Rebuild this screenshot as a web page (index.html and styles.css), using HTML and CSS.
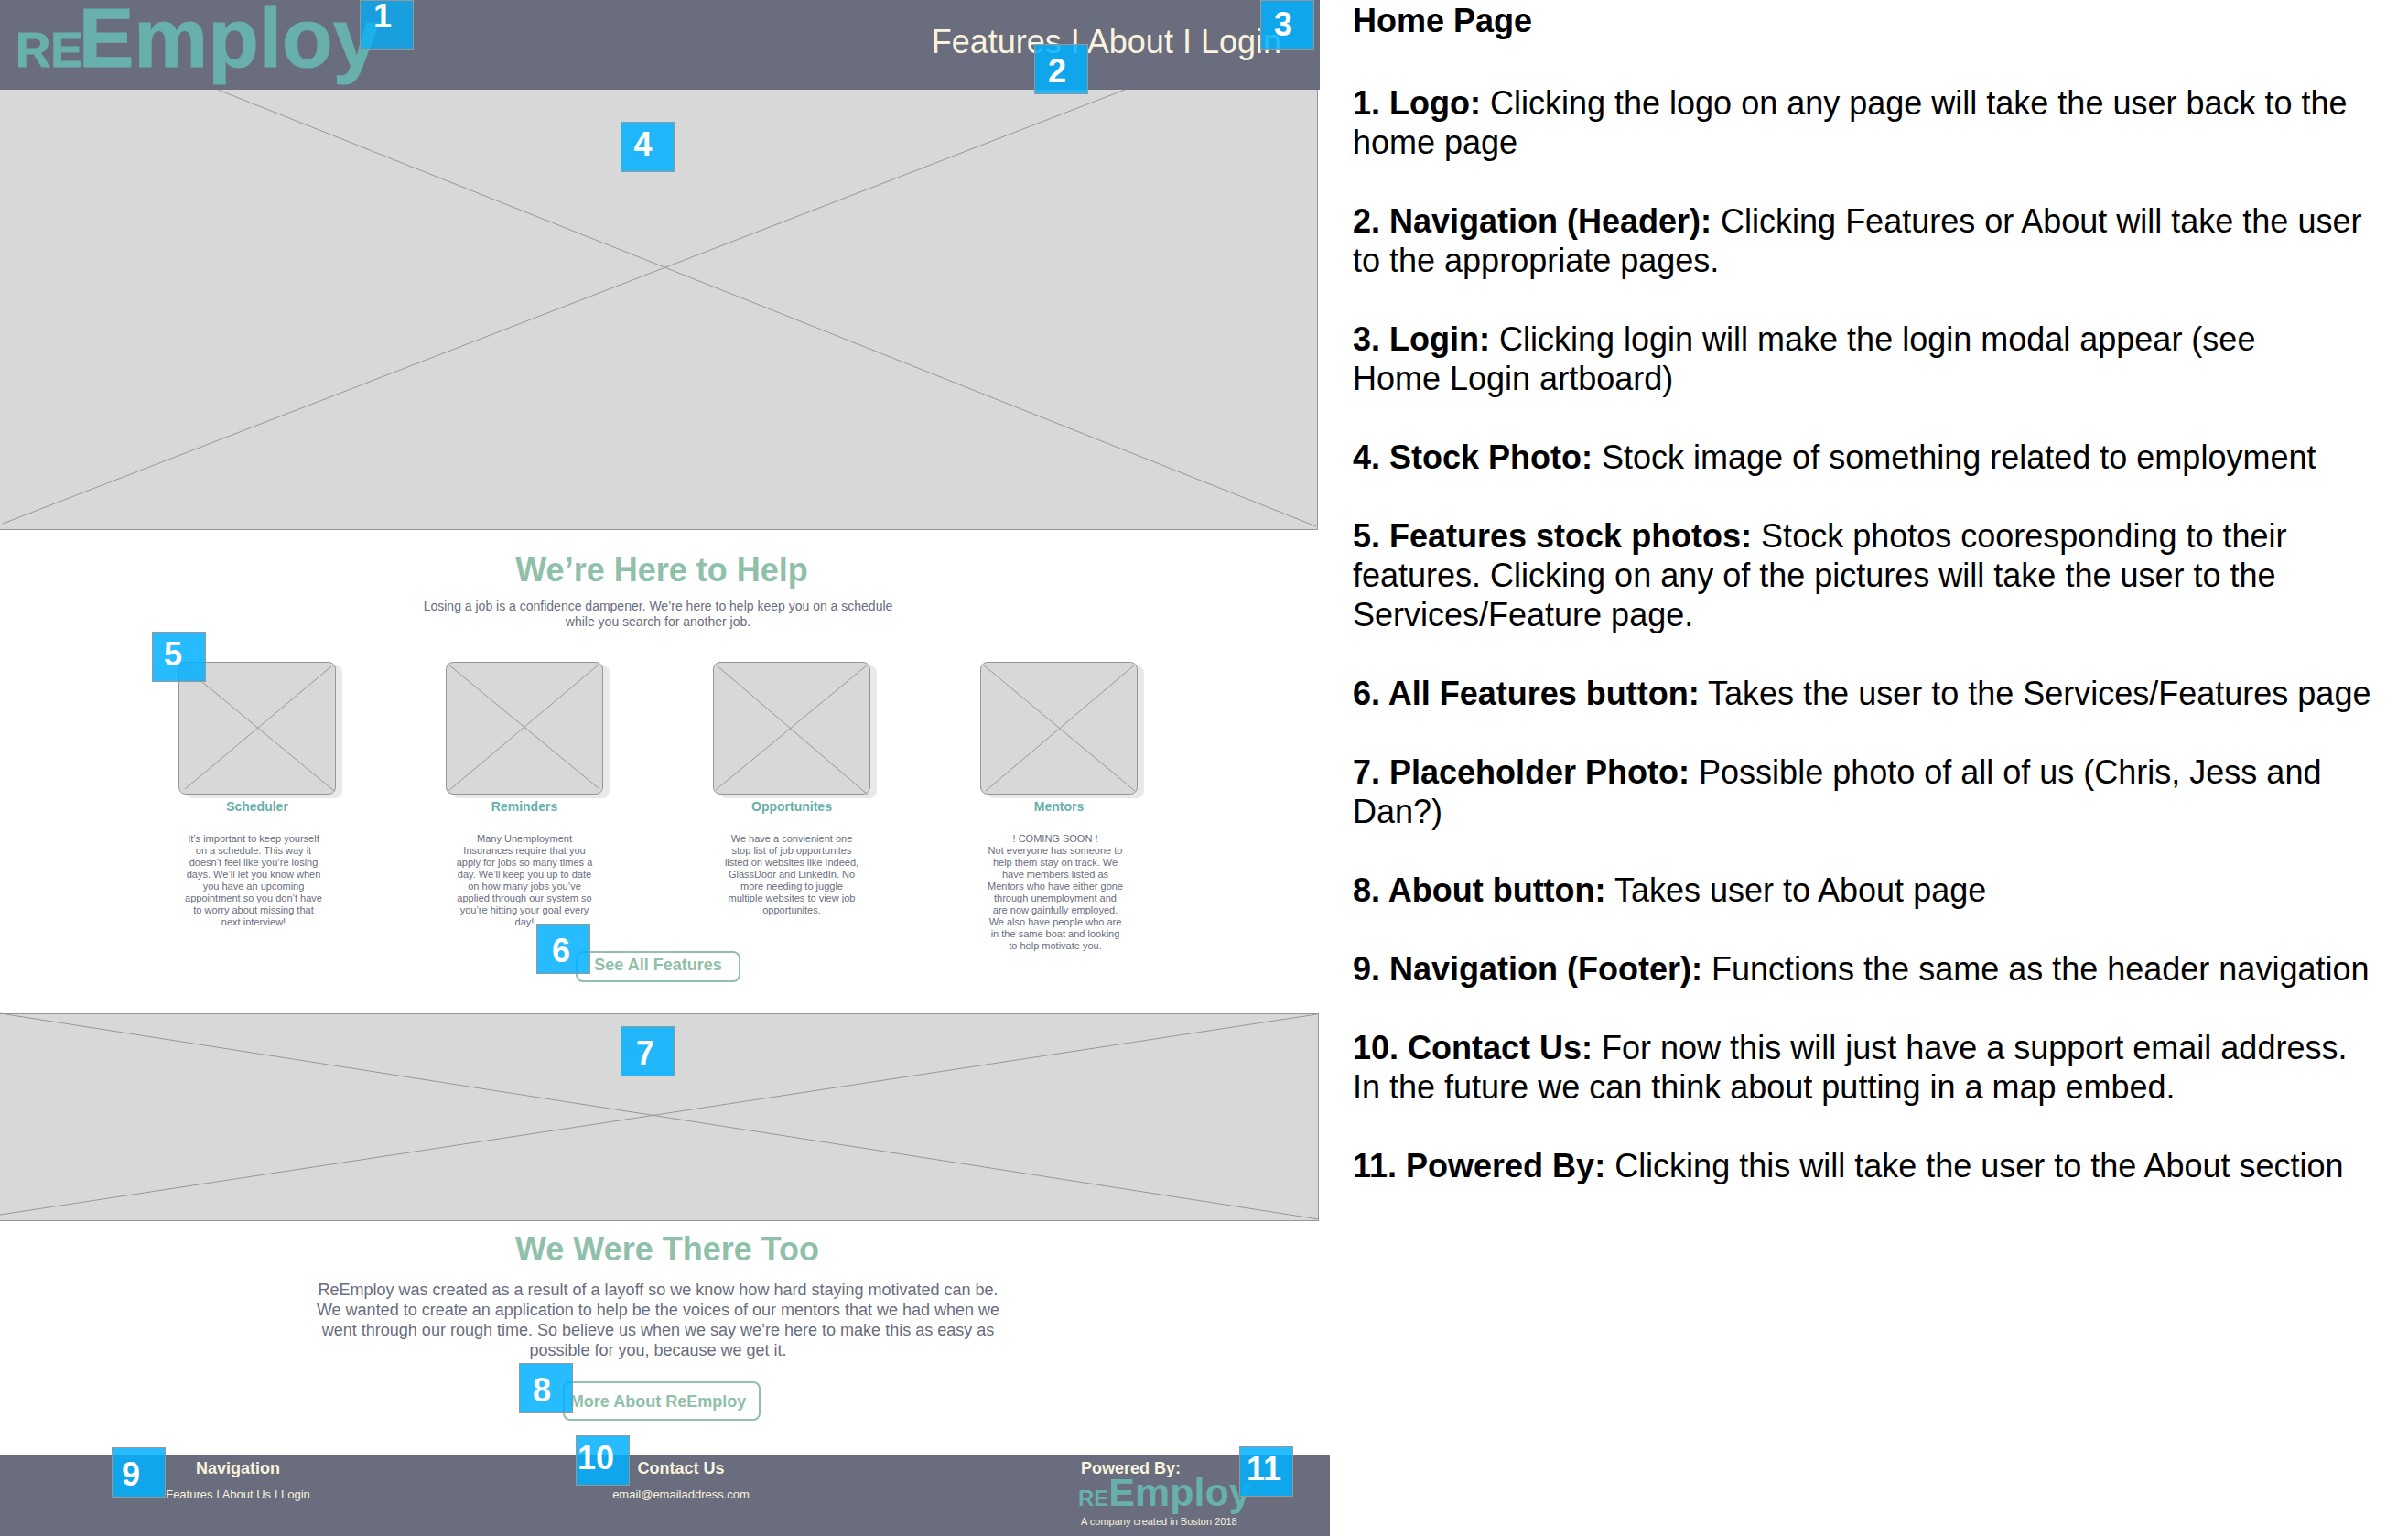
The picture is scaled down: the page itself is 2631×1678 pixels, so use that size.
FILE: index.html
```html
<!DOCTYPE html>
<html lang="en">
<head>
<meta charset="utf-8">
<meta name="viewport" content="width=device-width, initial-scale=1">
<title>ReEmploy – Home Page</title>
<link rel="stylesheet" href="styles.css">
</head>
<body>
<div class="sheet">
  <div class="board">
    <header class="topbar">
      <a class="logo" href="#"><span class="logo-re">RE</span><span class="logo-employ">Employ</span></a>
      <nav class="topnav"><a href="#features">Features</a> I <a href="#about">About</a> I <a href="#login">Login</a></nav>
      <span class="badge badge-1">1</span>
      <span class="badge badge-2 low">2</span>
      <span class="badge badge-3">3</span>
    </header>

    <div class="photo hero">
      <svg viewBox="0 0 1439 481" preserveAspectRatio="none" aria-hidden="true"><path d="M238 0L1438 478M1229 0L3 475"/></svg>
      <span class="badge badge-photo badge-4">4</span>
    </div>

    <section class="features" id="features">
      <h2>We’re Here to Help</h2>
      <p class="intro">Losing a job is a confidence dampener. We’re here to help keep you on a schedule while you search for another job.</p>
      <div class="cards">
        <article class="card card-outer">
          <a class="thumb" href="#scheduler" aria-label="Scheduler">
            <svg viewBox="0 0 170 143" preserveAspectRatio="none" aria-hidden="true"><path d="M2 2L169 140M166 4L6 138"/></svg>
            <span class="badge badge-5">5</span>
          </a>
          <h3>Scheduler</h3>
          <p>It’s important to keep yourself on a schedule. This way it doesn’t feel like you’re losing days. We’ll let you know when you have an upcoming appointment so you don’t have to worry about missing that next interview!</p>
        </article>
        <article class="card">
          <a class="thumb" href="#reminders" aria-label="Reminders">
            <svg viewBox="0 0 170 143" preserveAspectRatio="none" aria-hidden="true"><path d="M2 2L167 138M166 2L2 140"/></svg>
          </a>
          <h3>Reminders</h3>
          <p>Many Unemployment Insurances require that you apply for jobs so many times a day. We’ll keep you up to date on how many jobs you’ve applied through our system so you’re hitting your goal every day!</p>
        </article>
        <article class="card">
          <a class="thumb" href="#opportunites" aria-label="Opportunites">
            <svg viewBox="0 0 170 143" preserveAspectRatio="none" aria-hidden="true"><path d="M2 2L168 144M168 2L2 139"/></svg>
          </a>
          <h3>Opportunites</h3>
          <p>We have a convienient one stop list of job opportunites listed on websites like Indeed, GlassDoor and LinkedIn. No more needing to juggle multiple websites to view job opportunites.</p>
        </article>
        <article class="card card-outer">
          <a class="thumb" href="#mentors" aria-label="Mentors">
            <svg viewBox="0 0 170 143" preserveAspectRatio="none" aria-hidden="true"><path d="M2 2L168 140M168 2L5 140"/></svg>
          </a>
          <h3>Mentors</h3>
          <p>! COMING SOON !<br>Not everyone has someone to help them stay on track. We have members listed as Mentors who have either gone through unemployment and are now gainfully employed. We also have people who are in the same boat and looking to help motivate you.</p>
        </article>
      </div>
      <div class="action">
        <button class="btn btn-features" type="button">See All Features</button>
        <span class="badge badge-6 low">6</span>
      </div>
    </section>

    <div class="photo band">
      <svg viewBox="0 0 1441 227" preserveAspectRatio="none" aria-hidden="true"><path d="M0 -1L1442 226M1440 0L0 221"/></svg>
      <span class="badge badge-photo badge-7 low">7</span>
    </div>

    <section class="about" id="about">
      <h2>We Were There Too</h2>
      <p class="story">ReEmploy was created as a result of a layoff so we know how hard staying motivated can be. We wanted to create an application to help be the voices of our mentors that we had when we went through our rough time. So believe us when we say we’re here to make this as easy as possible for you, because we get it.</p>
      <div class="action">
        <button class="btn btn-about" type="button">More About ReEmploy</button>
        <span class="badge badge-8 low">8</span>
      </div>
    </section>

    <footer class="footer">
      <div class="foot-col">
        <h3>Navigation</h3>
        <nav class="foot-line"><a href="#features">Features</a> I <a href="#about">About Us</a> I <a href="#login">Login</a></nav>
        <span class="badge badge-9 low">9</span>
      </div>
      <div class="foot-col">
        <h3>Contact Us</h3>
        <p class="foot-line"><a href="mailto:email@emailaddress.com">email@emailaddress.com</a></p>
        <span class="badge badge-10">10</span>
      </div>
      <div class="foot-col foot-brand">
        <h3>Powered By:</h3>
        <a class="logo logo-small" href="#about"><span class="logo-re">RE</span><span class="logo-employ">Employ</span></a>
        <p class="tagline">A company created in Boston 2018</p>
        <span class="badge badge-11">11</span>
      </div>
    </footer>
  </div>

  <aside class="notes">
    <h1>Home Page</h1>
    <p><b>1. Logo:</b> Clicking the logo on any page will take the user back to the home page</p>
    <p><b>2. Navigation (Header):</b> Clicking Features or About will take the user to the appropriate pages.</p>
    <p><b>3. Login:</b> Clicking login will make the login modal appear (see<br>Home Login artboard)</p>
    <p><b>4. Stock Photo:</b> Stock image of something related to employment</p>
    <p><b>5. Features stock photos:</b> Stock photos cooresponding to their features. Clicking on any of the pictures will take the user to the Services/Feature page.</p>
    <p><b>6. All Features button:</b> Takes the user to the Services/Features page</p>
    <p><b>7. Placeholder Photo:</b> Possible photo of all of us (Chris, Jess and Dan?)</p>
    <p><b>8. About button:</b> Takes user to About page</p>
    <p><b>9. Navigation (Footer):</b> Functions the same as the header navigation</p>
    <p><b>10. Contact Us:</b> For now this will just have a support email address.<br>In the future we can think about putting in a map embed.</p>
    <p><b>11. Powered By:</b> Clicking this will take the user to the About section</p>
  </aside>
</div>
</body>
</html>
```
FILE: styles.css
```css
:root {
  --slate: #696d7d;
  --teal: #68b0ab;
  --sage: #8fc0a9;
  --cream: #faf3dd;
  --line: #979797;
  --fill: #d8d8d8;
}

* { box-sizing: border-box; }

body {
  margin: 0;
  background: #fff;
  color: #000;
  font-family: "Liberation Sans", Arial, Helvetica, sans-serif;
}

h1, h2, h3, p { margin: 0; }
a { color: inherit; text-decoration: none; }

.sheet {
  display: grid;
  grid-template-columns: 1453fr 1178fr;
  align-items: start;
}

/* Header */
.topbar {
  position: relative;
  display: flex;
  justify-content: space-between;
  align-items: flex-start;
  height: 98px;
  margin-right: 11px;
  padding: 0 42px 0 17px;
  background: var(--slate);
}

.logo {
  display: flex;
  align-items: baseline;
  color: var(--teal);
  font-weight: bold;
  line-height: 84px;
  -webkit-text-stroke: 1px var(--teal);
}
.logo-re { font-size: 53px; }
.logo-employ { margin-left: -5px; font-size: 91px; }

.topnav {
  color: var(--cream);
  font-size: 36px;
  line-height: 92px;
}

/* Numbered callouts */
.badge {
  position: absolute;
  z-index: 1;
  width: 59px;
  height: 55px;
  padding-left: 14px;
  border: 1px solid var(--line);
  background: rgba(0, 176, 255, .85);
  background-clip: padding-box;
  color: #fff;
  font-size: 36px;
  font-weight: bold;
  line-height: 47px;
  text-align: left;
}
.low { line-height: 57px; }
.badge-1 { left: 393px; top: 0; line-height: 33px; background-color: rgba(0, 176, 255, .75); }
.badge-2 { right: 253px; top: 48px; }
.badge-3 { right: 6px; top: 0; line-height: 51px; }
.badge-photo { left: 50%; margin-left: -42px; }
.badge-4 { top: 35px; }
.badge-5 { left: -30px; top: -34px; padding-left: 12px; }
.badge-6 { left: -43px; top: -30px; padding-left: 16px; }
.badge-7 { top: 13px; padding-left: 16px; }
.badge-8 { left: -48px; top: -20px; padding-left: 14px; }
.badge-9 { left: 122px; top: -9px; padding-left: 10px; }
.badge-10 { left: 109px; top: -22px; padding-left: 1px; }
.badge-11 { left: 386px; top: -10px; padding-left: 7px; }

/* Photo placeholders */
.photo {
  position: relative;
  border: 1px solid var(--line);
  border-left: 0;
  background: var(--fill);
}
.photo svg, .thumb svg {
  display: block;
  width: 100%;
  height: 100%;
  fill: none;
  stroke: var(--line);
  stroke-width: 1;
  overflow: visible;
}
.hero { height: 481px; margin-right: 13px; border-top: 0; }
.band { height: 227px; margin-right: 12px; }

/* Content sections */
.features, .about {
  display: flex;
  flex-direction: column;
  align-items: center;
  margin-right: 15px;
  color: var(--slate);
  text-align: center;
}
.features { padding: 22px 0 34px; }
.about { padding: 9px 0 38px; }

h2 {
  padding-left: 8px;
  color: var(--sage);
  font-size: 36px;
  line-height: 43px;
}
.about h2 { padding-left: 20px; }

.intro {
  width: 530px;
  margin-top: 10px;
  font-size: 14px;
  line-height: 17px;
}

.cards {
  display: flex;
  gap: 120px;
  margin-top: 35px;
}
.card {
  display: flex;
  flex-direction: column;
  align-items: center;
  width: 172px;
}
.thumb {
  position: relative;
  width: 172px;
  height: 145px;
  border: 1px solid var(--line);
  border-radius: 8px;
  background: var(--fill);
  box-shadow: 7px 4px 0 #e9e9e9;
}
.card h3 {
  margin-top: 5px;
  color: var(--teal);
  font-size: 14px;
  line-height: 17px;
}
.card p {
  width: 150px;
  margin: 20px 0 -1px;
  font-size: 11px;
  line-height: 13px;
}
.card-outer p { margin-right: 8px; }

.action { position: relative; }
.btn {
  display: block;
  padding: 0 0 4px;
  border: 2px solid var(--sage);
  border-radius: 8px;
  background: transparent;
  color: var(--sage);
  font: bold 18px/22px "Liberation Sans", Arial, Helvetica, sans-serif;
}
.btn-features { width: 180px; height: 34px; }
.btn-about { width: 216px; height: 43px; padding: 0 8px 0 0; }

.story {
  width: 760px;
  margin-top: 12px;
  font-size: 18px;
  line-height: 22px;
}
.about .action { margin: 23px 0 0 8px; }

/* Footer */
.footer {
  display: grid;
  grid-template-columns: 520fr 448fr 485fr;
  background: var(--slate);
  color: var(--cream);
  text-align: center;
}
.foot-col { position: relative; padding: 3px 0 9px; }
.foot-col h3 { font-size: 18px; line-height: 22px; }
.foot-line { margin-top: 10px; font-size: 13px; line-height: 16px; }
.foot-brand { padding-left: 212px; text-align: left; }
.foot-brand h3, .tagline { padding-left: 1px; }
.logo-small { margin-left: -2px; line-height: 30px; -webkit-text-stroke-width: 0; }
.logo-small .logo-re { font-size: 24px; }
.logo-small .logo-employ { margin-left: 0; font-size: 43px; }
.tagline { margin-top: 4px; font-size: 11px; line-height: 13px; }

/* Annotations */
.notes {
  padding: 1px 36px 0 25px;
  font-size: 36px;
  line-height: 43px;
}
.notes h1 { margin-bottom: 47px; font-size: 36px; }
.notes p + p { margin-top: 43px; }
```
